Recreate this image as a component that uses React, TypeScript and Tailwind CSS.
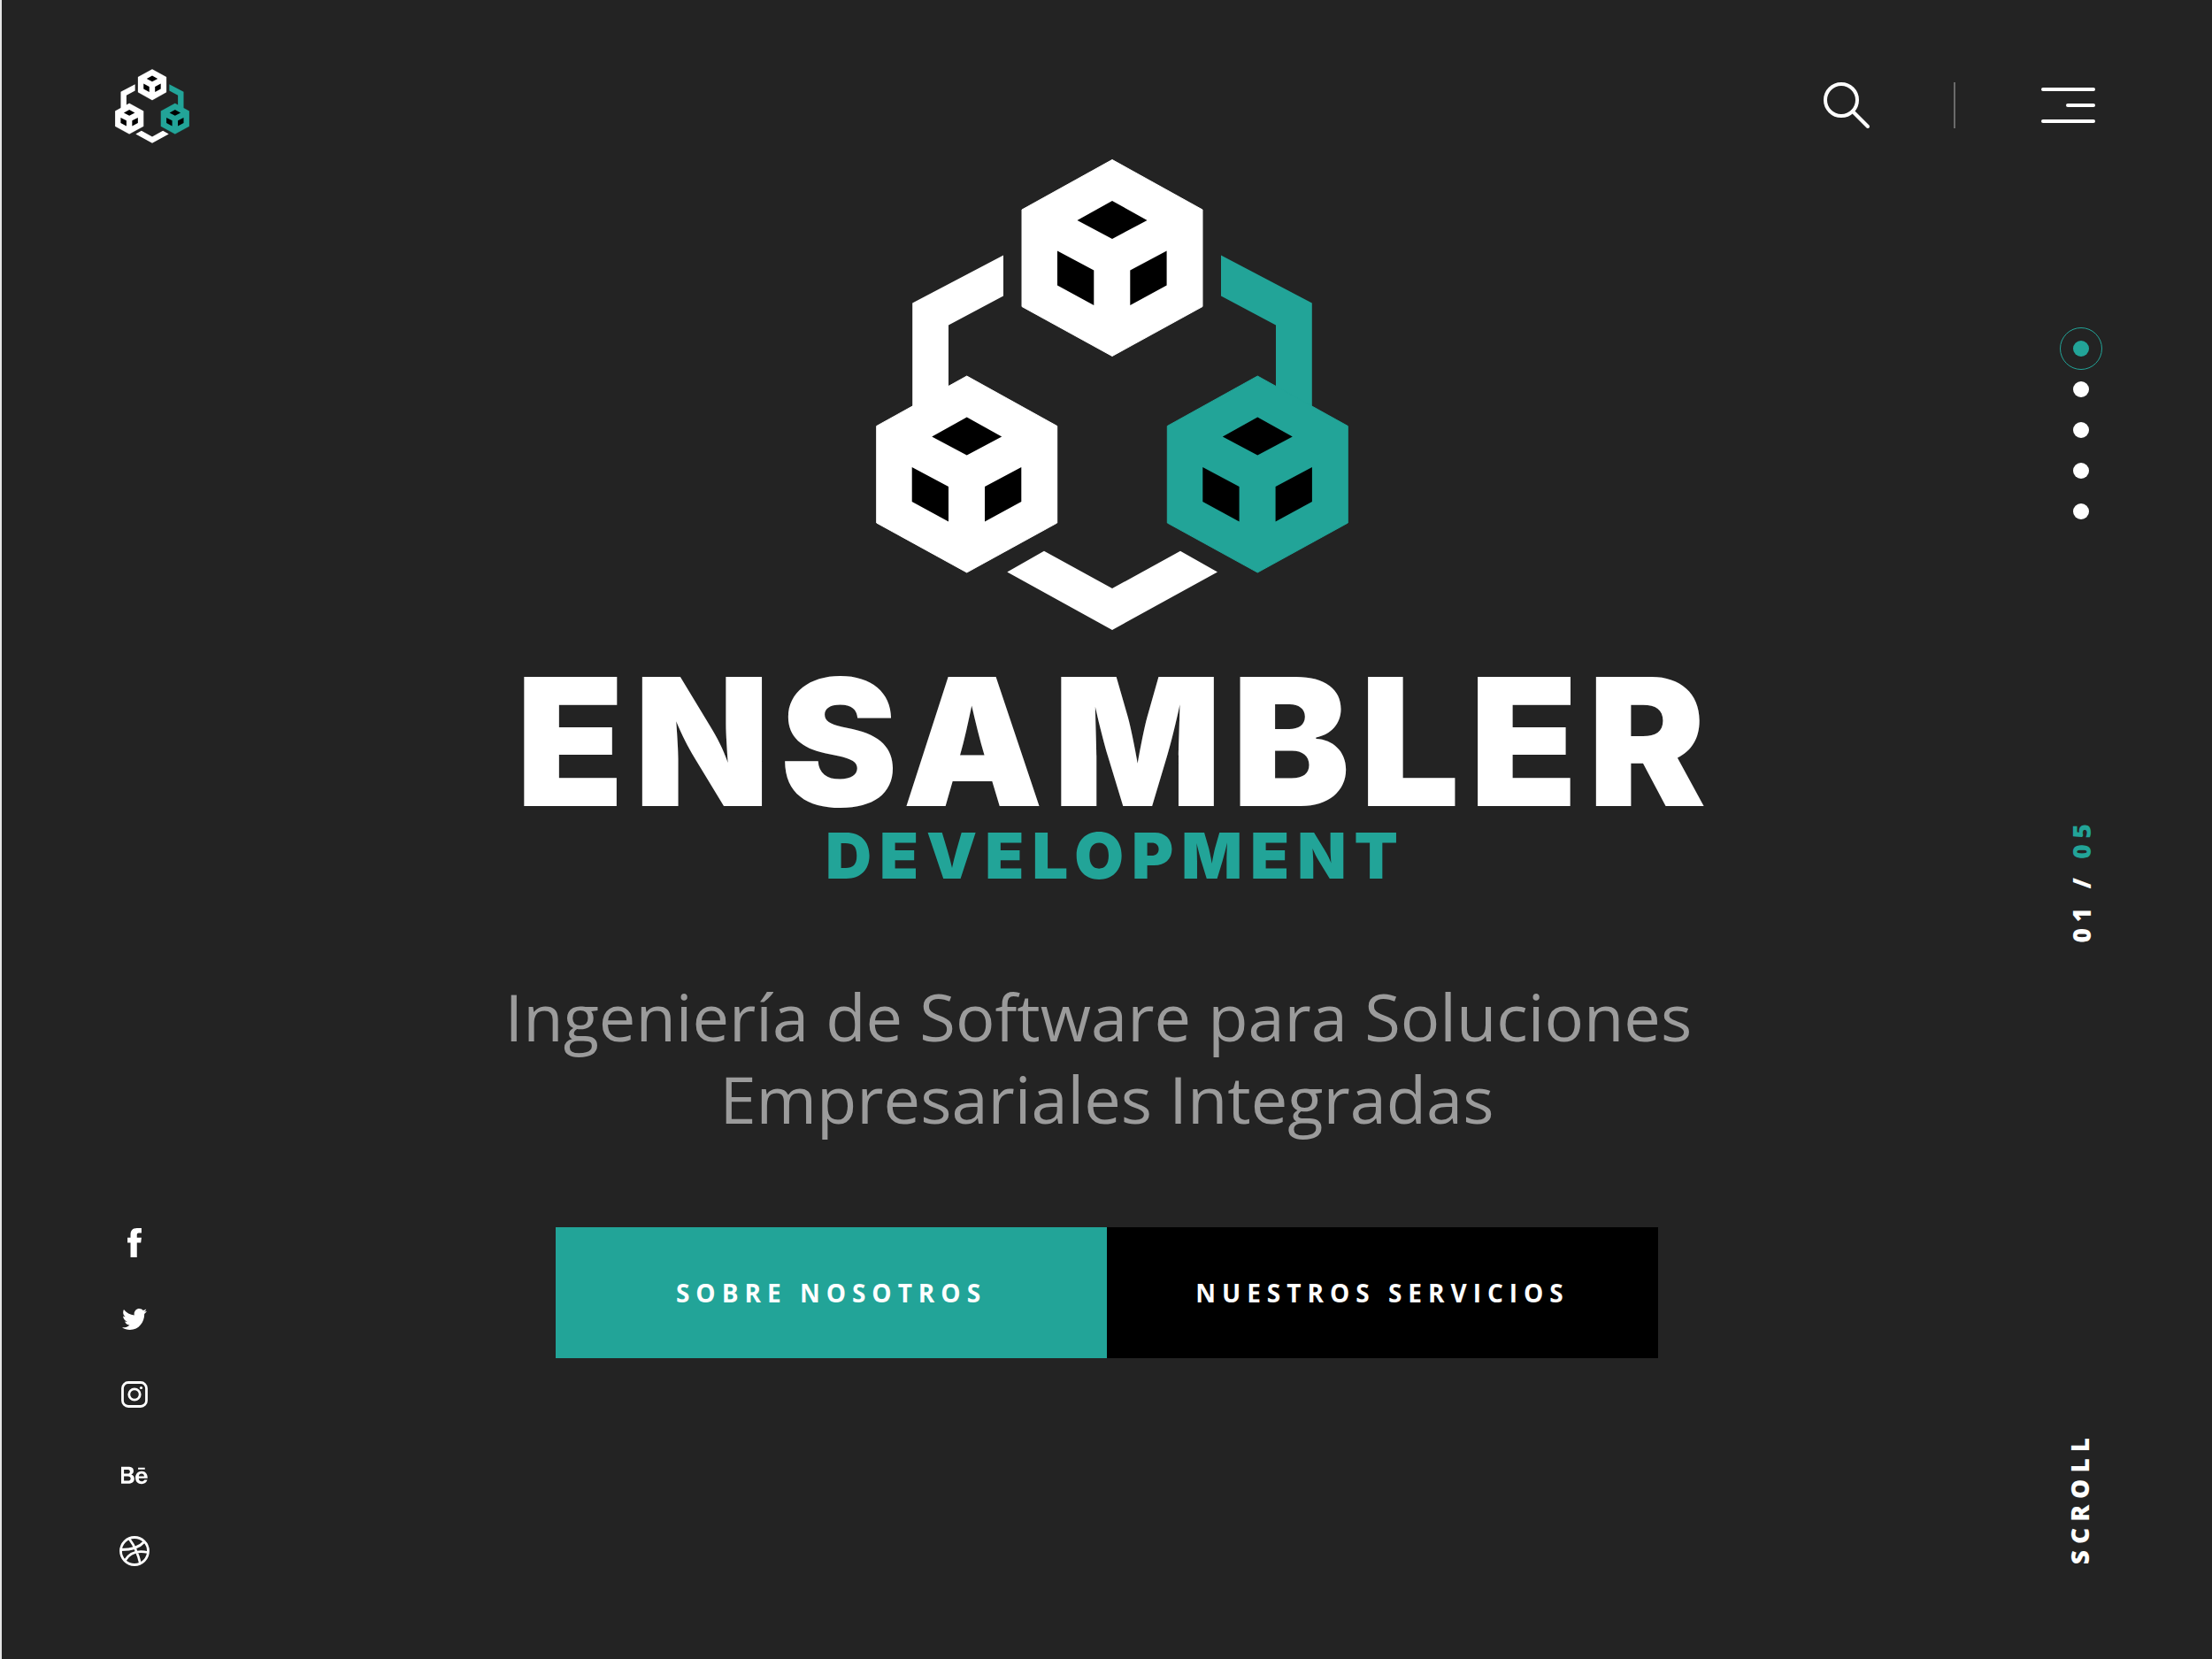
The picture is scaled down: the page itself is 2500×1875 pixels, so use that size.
import type { ReactNode } from "react";
import { FaBehance, FaTwitter } from "react-icons/fa";

const CUBE = "M297 20.5L399 77V186.5L297 242.5L195 186.5V77Z";
const FACES =
  "M297 67L336.5 89L297 110L257.5 89ZM235 123.5L276.3 145.5V185L235 162.5ZM358.6 123.5L317.3 145.5V185L358.6 162.5Z";

function Cube({ x, y, fill }: { x: number; y: number; fill: string }) {
  return (
    <g transform={`translate(${x} ${y})`}>
      <path d={CUBE} fill={fill} stroke={fill} strokeWidth="1" strokeLinejoin="round" />
      <path d={FACES} fill="#000" />
    </g>
  );
}

function Logo({ className }: { className: string }) {
  return (
    <svg viewBox="30 20 534 532" className={className} role="img" aria-label="Ensambler">
      <path d="M174 128.4V174.6L112 207.5V300H71.2V182.4Z" fill="#fff" />
      <path d="M420 128.4V174.6L482 207.5V300H522.8V182.4Z" fill="#22a498" />
      <path d="M178.3 486.4L220 462.8L297 505L374 462.8L416 486.4L297 552Z" fill="#fff" />
      <Cube x={0} y={0} fill="#fff" />
      <Cube x={-164.3} y={244.5} fill="#fff" />
      <Cube x={164.3} y={244.5} fill="#22a498" />
    </svg>
  );
}

function SocialLink({ label, children }: { label: string; children: ReactNode }) {
  return (
    <a href="#" aria-label={label} className="flex w-[34px] justify-center">
      {children}
    </a>
  );
}

function Header() {
  return (
    <header className="flex items-start justify-between pr-[132px] pl-32 pt-[78px]">
      <a href="#" aria-label="Inicio">
        <Logo className="h-[84px] w-[84px]" />
      </a>
      <div className="mt-[14px] flex items-center">
        <button type="button" aria-label="Buscar">
          <svg viewBox="0 0 54 54" className="h-[54px] w-[54px]" fill="none" stroke="#fff" strokeWidth="4" strokeLinecap="round">
            <circle cx="21" cy="21" r="18" />
            <path d="M34 34L51 51" />
          </svg>
        </button>
        <span className="ml-[94px] h-[52px] w-0.5 bg-[#6a6a6a]" />
        <button type="button" aria-label="Menú" className="ml-[97px] flex flex-col items-end gap-[14px]">
          <span className="h-1 w-[61px] rounded-full bg-white" />
          <span className="h-1 w-[33px] rounded-full bg-white" />
          <span className="h-1 w-[61px] rounded-full bg-white" />
        </button>
      </div>
    </header>
  );
}

function SocialRail() {
  return (
    <nav aria-label="Redes sociales" className="flex w-60 flex-col items-start justify-end gap-[58px] pb-[105px] pl-[133px] text-white">
      <SocialLink label="Facebook">
        <svg viewBox="134 82 46 96" className="h-[33px] w-4" fill="currentColor">
          <path d="M144 178V130H134V113H144V104C144 90 151 82 165 82H180V98H171C166 98 165 101 165 106V113H180L178 130H165V178Z" />
        </svg>
      </SocialLink>
      <SocialLink label="Twitter">
        <FaTwitter className="h-6 w-7" preserveAspectRatio="none" viewBox="0 48 512 416" />
      </SocialLink>
      <SocialLink label="Instagram">
        <svg viewBox="0 0 30 30" className="h-[30px] w-[30px]" fill="none" stroke="currentColor" strokeWidth="2.8">
          <rect x="1.5" y="1.5" width="27" height="27" rx="6.5" />
          <circle cx="15" cy="15" r="6.2" />
          <circle cx="22.5" cy="7.5" r="1.6" fill="currentColor" stroke="none" />
        </svg>
      </SocialLink>
      <SocialLink label="Behance">
        <FaBehance className="h-[29px] w-[30px]" viewBox="20 -75 560 512" />
      </SocialLink>
      <SocialLink label="Dribbble">
        <svg viewBox="0 0 34 34" className="h-[34px] w-[34px]" fill="none" stroke="currentColor" strokeWidth="2.8">
          <circle cx="17" cy="17" r="15.5" />
          <path d="M11 3C17 11 21 20 23.5 31M2 15.5C12 15.5 22 13.5 28 6.5M6 28C11 19 20 16 32 18.5" />
        </svg>
      </SocialLink>
    </nav>
  );
}

function SlideRail() {
  return (
    <aside className="flex w-60 flex-col items-end pb-[107px] pr-[124px] pt-[223px]">
      <div className="flex w-12 flex-col items-center gap-7">
        {[1, 2, 3, 4, 5].map((n) => (
          <button
            key={n}
            type="button"
            aria-label={`Sección ${n}`}
            className={n === 1 ? "relative h-[18px] w-[18px] rounded-full bg-[#22a498]" : "h-[18px] w-[18px] rounded-full bg-white"}
          >
            {n === 1 && <span className="absolute -inset-[15px] rounded-full border border-[#22a498]" />}
          </button>
        ))}
      </div>
      <p className="mt-[337px] w-12 rotate-180 font-['Open_Sans'] text-[28px] font-extrabold leading-[48px] tracking-[7px] text-white [writing-mode:vertical-rl]">
        01 / <span className="text-[#22a498]">05</span>
      </p>
      <a
        href="#"
        className="mt-auto w-[52px] rotate-180 font-['Open_Sans'] text-[28px] font-extrabold leading-[52px] tracking-[7px] text-white [writing-mode:vertical-rl]"
      >
        SCROLL
      </a>
    </aside>
  );
}

export default function App() {
  return (
    <div className="flex min-h-screen flex-col border-l-2 border-[#e5e5e5] bg-[#232323]">
      <Header />
      <div className="flex flex-1">
        <SocialRail />
        <main className="flex flex-1 flex-col items-center pt-[18px] text-center">
          <div className="flex flex-col items-center pl-3">
            <Logo className="h-[532px] w-[534px]" />
            <h1 className="mt-[46px] whitespace-nowrap pl-2 font-['Inter'] text-[200px] font-black leading-[160px] tracking-[11px] text-white">
              ENSAMBLER
            </h1>
            <p className="mt-[13px] whitespace-nowrap pl-2 font-['Inter'] text-[72px] font-black leading-[72px] tracking-[9px] text-[#22a498]">
              DEVELOPMENT
            </p>
          </div>
          <p className="mt-[99px] whitespace-nowrap font-['Open_Sans'] text-[74px] font-normal leading-[93px] text-[#9b9b9b]">
            Ingeniería de Software para Soluciones&nbsp;
            <br />
            Empresariales Integradas
          </p>
          <div className="mt-[99px] grid w-full max-w-[1246px] grid-cols-2 font-['Open_Sans'] text-[28px] font-bold tracking-[7px] text-white">
            <button type="button" className="h-[148px] bg-[#22a498]">
              SOBRE NOSOTROS
            </button>
            <button type="button" className="h-[148px] bg-black">
              NUESTROS SERVICIOS
            </button>
          </div>
        </main>
        <SlideRail />
      </div>
    </div>
  );
}
